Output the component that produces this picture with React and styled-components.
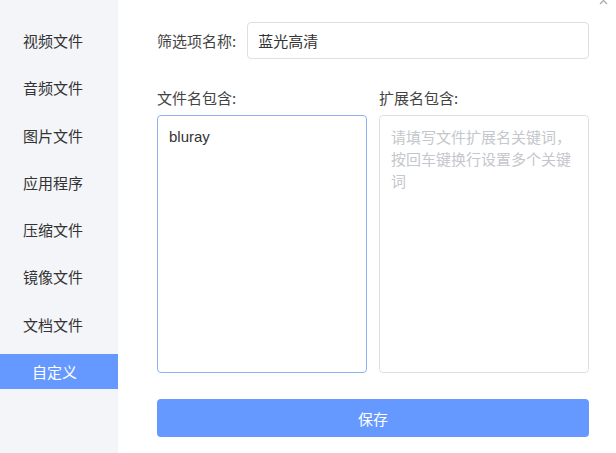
import { styled, createGlobalStyle } from 'styled-components';

const GlobalStyle = createGlobalStyle`
  html, body {
    margin: 0;
    padding: 0;
    background: #ffffff;
  }
  body {
    font-family: "Microsoft YaHei", "Noto Sans CJK SC", "Liberation Sans", sans-serif;
    color: #333;
  }
`;

const Dialog = styled.div`
  position: relative;
  display: flex;
  width: 616px;
  height: 453px;
  background: #fff;
  overflow: hidden;
`;

const Sidebar = styled.ul`
  list-style: none;
  margin: 0;
  padding: 23px 0 0;
  width: 118px;
  flex-shrink: 0;
  background: #f3f5f9;
`;

const NavItem = styled.li`
  height: 35px;
  margin-bottom: 12.3px;
  padding-left: ${(p) => (p.$active ? '32px' : '23px')};
  display: flex;
  align-items: center;
  font-size: 15px;
  color: ${(p) => (p.$active ? '#fff' : '#333')};
  background: ${(p) => (p.$active ? '#6699ff' : 'transparent')};
`;

const Main = styled.div`
  flex: 1;
  padding: 22px 27px 0 39px;
  display: flex;
  flex-direction: column;
`;

const NameRow = styled.div`
  display: flex;
  align-items: center;
  gap: 11px;
`;

const Label = styled.label`
  font-size: 15px;
  color: #444;
  white-space: nowrap;
`;

const TextInput = styled.div`
  flex: 1;
  height: 37px;
  box-sizing: border-box;
  border: 1px solid #dcdfe6;
  border-radius: 4px;
  padding: 0 10px;
  display: flex;
  align-items: center;
  font-size: 15px;
  color: #333;
`;

const Columns = styled.div`
  display: grid;
  grid-template-columns: 210px 210px;
  gap: 12px;
  margin-top: 28px;
`;

const Field = styled.div`
  display: flex;
  flex-direction: column;
  gap: 7px;
`;

const Area = styled.div`
  height: 258px;
  box-sizing: border-box;
  border: 1px solid ${(p) => (p.$focused ? '#8fb0f3' : '#dcdfe6')};
  border-radius: 4px;
  padding: 10px 11px;
  font-size: 15px;
  line-height: 22px;
  color: ${(p) => (p.$placeholder ? '#c4c7cc' : '#333')};
  font-family: ${(p) => (p.$placeholder ? 'inherit' : '"Microsoft YaHei", "Liberation Sans", sans-serif')};
`;

const SaveButton = styled.button`
  margin-top: 26px;
  height: 38px;
  width: 432px;
  border: none;
  border-radius: 4px;
  background: #6699ff;
  color: #fff;
  font-size: 15px;
  font-family: inherit;
`;

const Close = styled.svg`
  position: absolute;
  top: -4px;
  left: 599px;
  width: 9px;
  height: 9px;
`;

const categories = ['视频文件', '音频文件', '图片文件', '应用程序', '压缩文件', '镜像文件', '文档文件', '自定义'];

export default function App() {
  return (
    <>
      <GlobalStyle />
      <Dialog>
        <Sidebar>
          {categories.map((c) => (
            <NavItem key={c} $active={c === '自定义'}>{c}</NavItem>
          ))}
        </Sidebar>
        <Main>
          <NameRow>
            <Label>筛选项名称:</Label>
            <TextInput>蓝光高清</TextInput>
          </NameRow>
          <Columns>
            <Field>
              <Label>文件名包含:</Label>
              <Area $focused>bluray</Area>
            </Field>
            <Field>
              <Label>扩展名包含:</Label>
              <Area $placeholder>请填写文件扩展名关键词，按回车键换行设置多个关键词</Area>
            </Field>
          </Columns>
          <SaveButton>保存</SaveButton>
        </Main>
        <Close viewBox="0 0 9 9">
          <path d="M1 1 L8 8 M8 1 L1 8" stroke="#a8a8a8" strokeWidth="1.3" fill="none" />
        </Close>
      </Dialog>
    </>
  );
}
